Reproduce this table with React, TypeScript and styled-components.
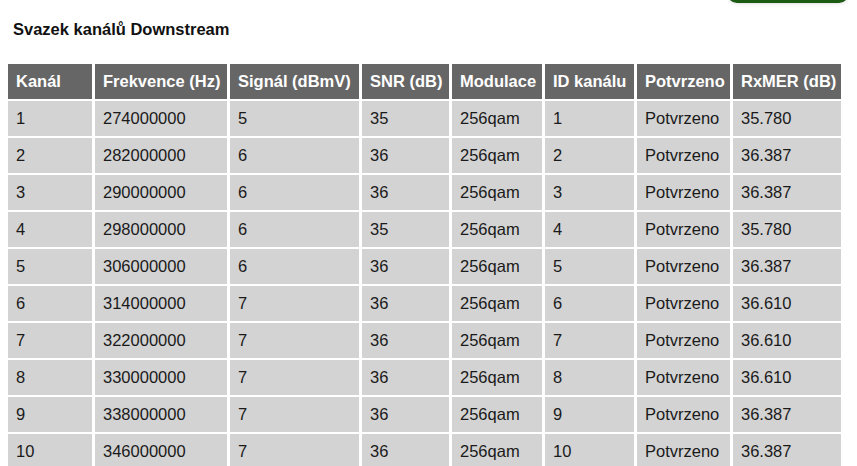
import { createGlobalStyle } from 'styled-components'
import styled from 'styled-components'

const GlobalStyle = createGlobalStyle`
  html, body {
    margin: 0;
    padding: 0;
    background: #ffffff;
  }
  body {
    font-family: 'Liberation Sans', Arial, sans-serif;
    overflow: hidden;
  }
`

const columns = [
  { title: 'Kanál', width: 84 },
  { title: 'Frekvence (Hz)', width: 132 },
  { title: 'Signál (dBmV)', width: 129 },
  { title: 'SNR (dB)', width: 87 },
  { title: 'Modulace', width: 90 },
  { title: 'ID kanálu', width: 89 },
  { title: 'Potvrzeno', width: 93 },
  { title: 'RxMER (dB)', width: 108 },
]

const rows: (string | number)[][] = [
  [1, 274000000, 5, 35, '256qam', 1, 'Potvrzeno', '35.780'],
  [2, 282000000, 6, 36, '256qam', 2, 'Potvrzeno', '36.387'],
  [3, 290000000, 6, 36, '256qam', 3, 'Potvrzeno', '36.387'],
  [4, 298000000, 6, 35, '256qam', 4, 'Potvrzeno', '35.780'],
  [5, 306000000, 6, 36, '256qam', 5, 'Potvrzeno', '36.387'],
  [6, 314000000, 7, 36, '256qam', 6, 'Potvrzeno', '36.610'],
  [7, 322000000, 7, 36, '256qam', 7, 'Potvrzeno', '36.610'],
  [8, 330000000, 7, 36, '256qam', 8, 'Potvrzeno', '36.610'],
  [9, 338000000, 7, 36, '256qam', 9, 'Potvrzeno', '36.387'],
  [10, 346000000, 7, 36, '256qam', 10, 'Potvrzeno', '36.387'],
]

const App = () => {
  return (
    <Page>
      <GlobalStyle />
      <TopBar>
        <GreenButton />
      </TopBar>
      <Title>Svazek kanálů Downstream</Title>
      <Table>
        <colgroup>
          {columns.map((c) => (
            <col key={c.title} style={{ width: c.width }} />
          ))}
        </colgroup>
        <thead>
          <tr>
            {columns.map((c) => (
              <HeadCell key={c.title}>{c.title}</HeadCell>
            ))}
          </tr>
        </thead>
        <tbody>
          {rows.map((row) => (
            <tr key={row[0]}>
              {row.map((value, i) => (
                <Cell key={i}>{value}</Cell>
              ))}
            </tr>
          ))}
        </tbody>
      </Table>
    </Page>
  )
}

const Page = styled.div`
  width: 857px;
  height: 466px;
  padding: 0 5px;
  box-sizing: border-box;
  overflow: hidden;
`

const TopBar = styled.div`
  display: flex;
  justify-content: flex-end;
  height: 6px;
  padding-right: 3px;
`

const GreenButton = styled.div`
  width: 122px;
  height: 30px;
  margin-top: -27px;
  background: #1d5a14;
  border-radius: 0 0 10px 10px;
  box-shadow: 0 1px 3px rgba(0, 0, 0, 0.12);
`

const Title = styled.h2`
  margin: 14px 0 0 8px;
  font-size: 16.5px;
  line-height: 18px;
  font-weight: bold;
  color: #111111;
`

const Table = styled.table`
  margin-top: 24px;
  table-layout: fixed;
  border-collapse: separate;
  border-spacing: 3px 2px;
  width: 838px;
  font-size: 16.5px;
`

const HeadCell = styled.th`
  height: 35px;
  padding: 0 8px;
  background: #666666;
  color: #ffffff;
  font-weight: bold;
  text-align: left;
  white-space: nowrap;
  box-sizing: border-box;
`

const Cell = styled.td`
  height: 35px;
  padding: 0 8px;
  background: #d3d3d3;
  color: #1a1a1a;
  text-align: left;
  white-space: nowrap;
  box-sizing: border-box;
`

export default App
